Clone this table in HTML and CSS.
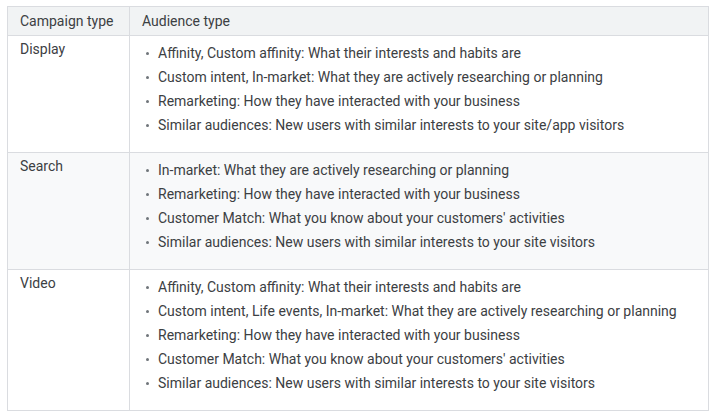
FILE: index.html
```html
<!DOCTYPE html>
<html>
<head>
<meta charset="utf-8">
<link rel="stylesheet" href="styles.css">
</head>
<body>
<table class="aud">
  <thead>
    <tr><th class="c1">Campaign type</th><th>Audience type</th></tr>
  </thead>
  <tbody>
    <tr>
      <td class="c1">Display</td>
      <td><ul>
        <li>Affinity, Custom affinity: What their interests and habits are</li>
        <li>Custom intent, In-market: What they are actively researching or planning</li>
        <li>Remarketing: How they have interacted with your business</li>
        <li>Similar audiences: New users with similar interests to your site/app visitors</li>
      </ul></td>
    </tr>
    <tr class="alt">
      <td class="c1">Search</td>
      <td><ul>
        <li>In-market: What they are actively researching or planning</li>
        <li>Remarketing: How they have interacted with your business</li>
        <li>Customer Match: What you know about your customers' activities</li>
        <li>Similar audiences: New users with similar interests to your site visitors</li>
      </ul></td>
    </tr>
    <tr>
      <td class="c1">Video</td>
      <td><ul>
        <li>Affinity, Custom affinity: What their interests and habits are</li>
        <li>Custom intent, Life events, In-market: What they are actively researching or planning</li>
        <li>Remarketing: How they have interacted with your business</li>
        <li>Customer Match: What you know about your customers' activities</li>
        <li>Similar audiences: New users with similar interests to your site visitors</li>
      </ul></td>
    </tr>
  </tbody>
</table>
</body>
</html>
```
FILE: styles.css
```css
html, body { margin: 0; padding: 0; background: #fff; }
body {
  padding: 6px 0 0 7px;
  font-family: Roboto, "Liberation Sans", sans-serif;
  font-size: 14px;
  line-height: 20px;
  color: #3c4043;
}
.aud {
  border-collapse: collapse;
  width: 702px;
  table-layout: fixed;
}
.aud th, .aud td {
  border: 1px solid #dadce0;
  text-align: left;
  vertical-align: top;
  font-weight: 400;
  padding: 3px 12px 15px 12px;
}
.aud th {
  background: #f1f3f4;
  padding: 4px 12px 4px 12px;
}
.aud .c1 { width: 97px; }
.aud tr.alt td { background: #f8f9fa; }
.aud ul {
  margin: 2px 0 0 0;
  padding: 0 0 0 16px;
  list-style: none;
}
.aud li {
  position: relative;
  padding: 2px 0;
}
.aud li::before {
  content: "";
  position: absolute;
  left: -12px;
  top: 11px;
  width: 3px;
  height: 3px;
  border-radius: 50%;
  background: #70757a;
}
```
